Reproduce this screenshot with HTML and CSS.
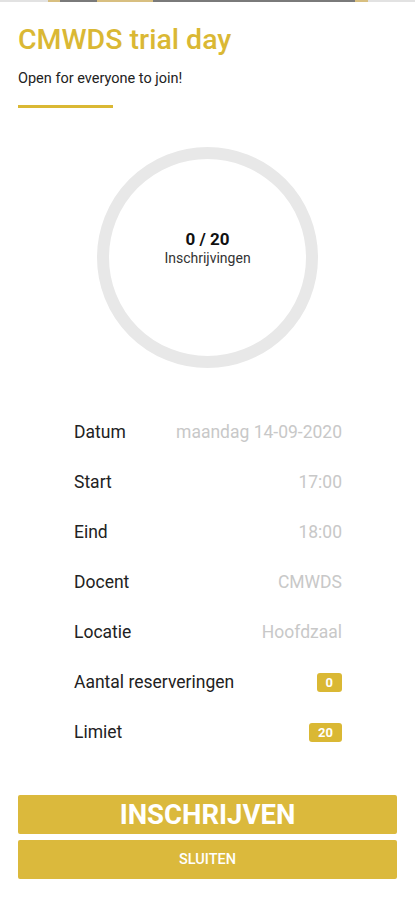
FILE: index.html
```
<!DOCTYPE html>
<html lang="nl">
<head>
    <meta charset="UTF-8">
    <meta name="viewport" content="width=device-width, initial-scale=1.0">
    <title>CMWDS trial day</title>
    <link rel="stylesheet" href="styles.css">
</head>
<body>
    <div class="top-strip">
        <span class="seg gold" style="width:12px"></span>
        <span class="seg dark" style="width:37px"></span>
        <span class="seg gold" style="width:56px"></span>
        <span class="seg dark" style="width:202px"></span>
        <span class="seg gold" style="width:13px"></span>
    </div>

    <div class="page">
        <h1 class="title">CMWDS trial day</h1>
        <p class="subtitle">Open for everyone to join!</p>
        <div class="underline"></div>

        <div class="ring-wrap">
            <div class="ring">
                <div class="count">0 / 20</div>
                <div class="count-label">Inschrijvingen</div>
            </div>
        </div>

        <div class="details">
            <div class="row"><span class="label">Datum</span><span class="value">maandag 14-09-2020</span></div>
            <div class="row"><span class="label">Start</span><span class="value">17:00</span></div>
            <div class="row"><span class="label">Eind</span><span class="value">18:00</span></div>
            <div class="row"><span class="label">Docent</span><span class="value">CMWDS</span></div>
            <div class="row"><span class="label">Locatie</span><span class="value">Hoofdzaal</span></div>
            <div class="row"><span class="label">Aantal reserveringen</span><span class="badge">0</span></div>
            <div class="row"><span class="label">Limiet</span><span class="badge">20</span></div>
        </div>

        <div class="actions">
            <button class="btn btn-main">INSCHRIJVEN</button>
            <button class="btn btn-close">SLUITEN</button>
        </div>
    </div>
</body>
</html>
```

FILE: styles.css
```
html, body {
    margin: 0;
    height: 100%;
}
body {
    font-family: Roboto, "Liberation Sans", sans-serif;
    background: #ffffff;
    color: #222;
}
.top-strip {
    height: 2px;
    background: #e2e2e2;
    display: flex;
    padding-left: 48px;
}
.seg {
    display: block;
    height: 2px;
}
.seg.gold {
    background: #d8bf80;
}
.seg.dark {
    background: #7a7a7a;
}
.page {
    padding: 0 18px;
}
.title {
    margin: 0;
    padding-top: 20px;
    font-size: 28.5px;
    font-weight: 500;
    color: #dab834;
    line-height: 36px;
}
.subtitle {
    margin: 12px 0 0;
    font-size: 14.5px;
    line-height: 18px;
    color: #222;
}
.underline {
    width: 95px;
    height: 3px;
    background: #dab834;
    margin-top: 17px;
}
.ring-wrap {
    display: flex;
    justify-content: center;
    margin-top: 39px;
}
.ring {
    width: 197px;
    height: 197px;
    border: 12px solid #e8e8e8;
    border-radius: 50%;
    display: flex;
    flex-direction: column;
    align-items: center;
    justify-content: center;
}
.count {
    font-size: 17px;
    font-weight: 700;
    color: #111;
    line-height: 20px;
    margin-top: -20px;
}
.count-label {
    font-size: 14px;
    color: #333;
    line-height: 18px;
}
.details {
    margin: 39px 55px 0 56px;
}
.row {
    display: flex;
    justify-content: space-between;
    align-items: center;
    height: 50px;
    font-size: 17.5px;
}
.label {
    color: #222;
}
.value {
    color: #c8c8c8;
}
.badge {
    background: #dab834;
    color: #fff;
    font-size: 13px;
    font-weight: 700;
    padding: 2px 9px;
    border-radius: 3px;
    line-height: 15px;
}
.actions {
    margin-top: 38px;
    display: flex;
    flex-direction: column;
    gap: 6px;
}
.btn {
    display: block;
    width: 100%;
    border: none;
    border-radius: 2px;
    background: #dbb93c;
    color: #fff;
    font-family: Roboto, "Liberation Sans", sans-serif;
    padding: 0;
    cursor: pointer;
}
.btn-main {
    height: 39px;
    font-size: 27.5px;
    font-weight: 700;
}
.btn-close {
    height: 39px;
    font-size: 14.5px;
    font-weight: 500;
}
```
